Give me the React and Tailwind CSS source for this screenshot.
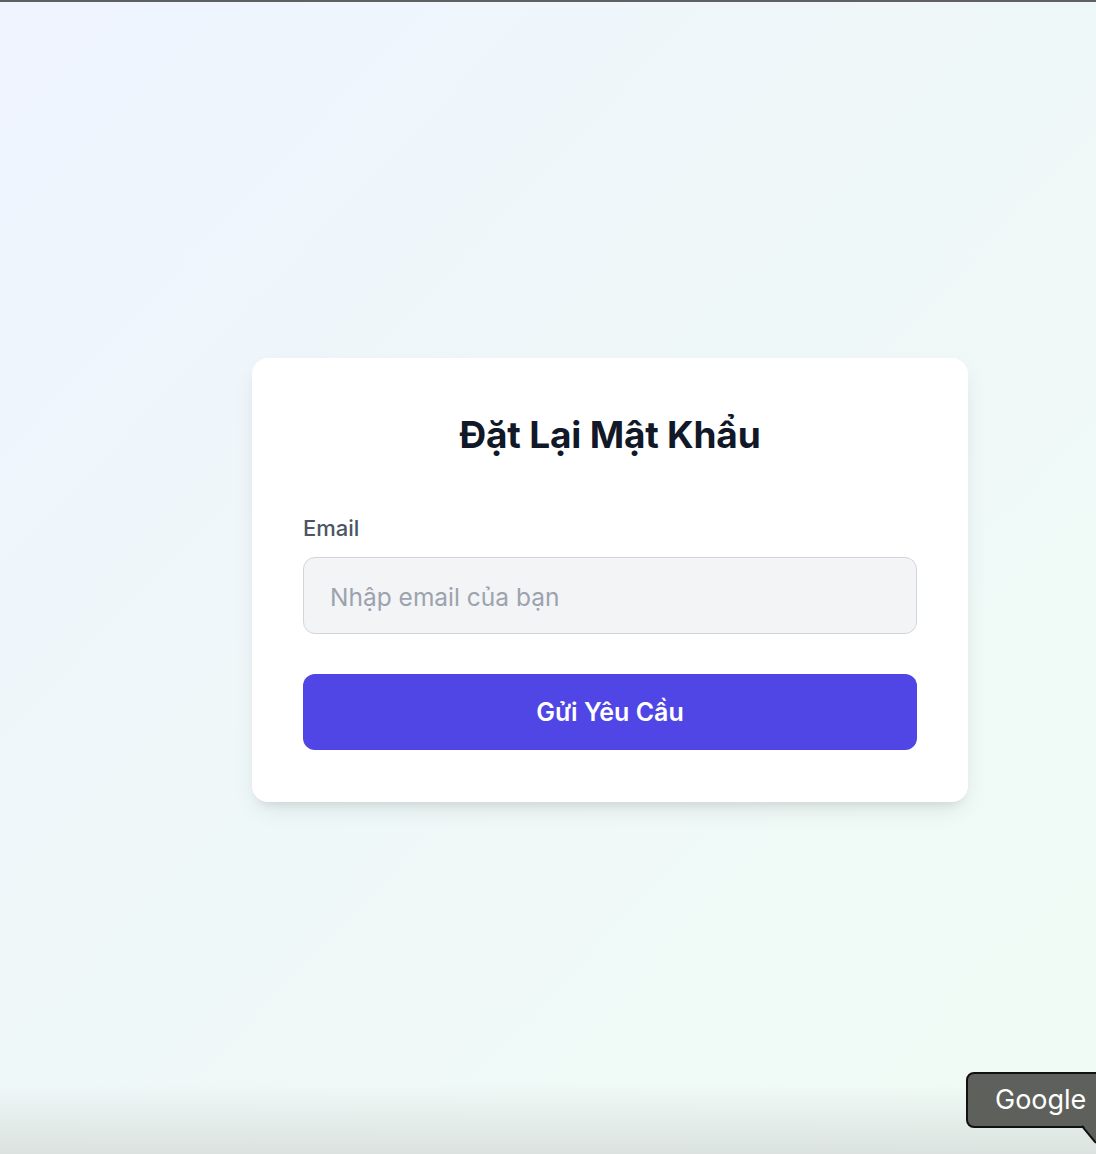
export default function App() {
  return (
    <div className="relative h-[1154px] w-[1096px] overflow-hidden bg-gradient-to-br from-[#eff4ff] via-[#eff8f8] to-[#f0fbf5] font-['Inter',sans-serif]">
      {/* top window edge */}
      <div className="h-[2px] w-full bg-[#5f6062]" />

      <div className="flex h-[1152px] items-center">
        <div className="ml-[252px] mt-[4px] w-[716px] rounded-[16px] bg-white px-[51px] pb-[52px] pt-[50px] shadow-[0_10px_25px_-5px_rgba(0,0,0,0.1),0_8px_10px_-6px_rgba(0,0,0,0.08)]">
          <h1 className="text-center text-[37px] font-bold leading-[54px] tracking-[-0.2px] text-[#111827]">
            Đặt Lại Mật Khẩu
          </h1>

          <form className="mt-[50px]" onSubmit={(e) => e.preventDefault()}>
            <label className="block text-[22px] font-medium leading-[32px] text-[#4b5563]">Email</label>
            <input
              type="email"
              placeholder="Nhập email của bạn"
              className="mt-[13px] block h-[77px] w-full rounded-[12px] border border-[#d1d5db] bg-[#f3f4f6] px-[26px] pt-[3px] text-[24.5px] text-[#111827] outline-none placeholder:text-[#9ca3af]"
            />
            <button
              type="submit"
              className="mt-[40px] flex h-[76px] w-full items-center justify-center rounded-[12px] bg-[#4f46e5] pt-[2px] text-[25px] font-semibold text-white"
            >
              Gửi Yêu Cầu
            </button>
          </form>
        </div>
      </div>

      {/* bottom shade from the browser frame */}
      <div className="pointer-events-none absolute bottom-0 left-0 h-[70px] w-full bg-gradient-to-b from-transparent to-[#dbe2df]" />

      {/* tooltip over the corner */}
      <div className="absolute left-[966px] top-[1072px]">
        <div className="flex h-[56px] w-[160px] items-center rounded-[8px] border-2 border-[#111] bg-[#5d605b] pl-[27px] text-[27px] text-white">
          Google
        </div>
        <svg className="absolute left-[114px] top-[52px]" width="30" height="20" viewBox="0 0 30 20">
          <path d="M2 0 L30 0 L30 2 L15 18 Z" fill="#5d605b" />
          <path d="M2 2 L15 18 L18 19" fill="none" stroke="#111" strokeWidth="2" />
        </svg>
      </div>
    </div>
  );
}
